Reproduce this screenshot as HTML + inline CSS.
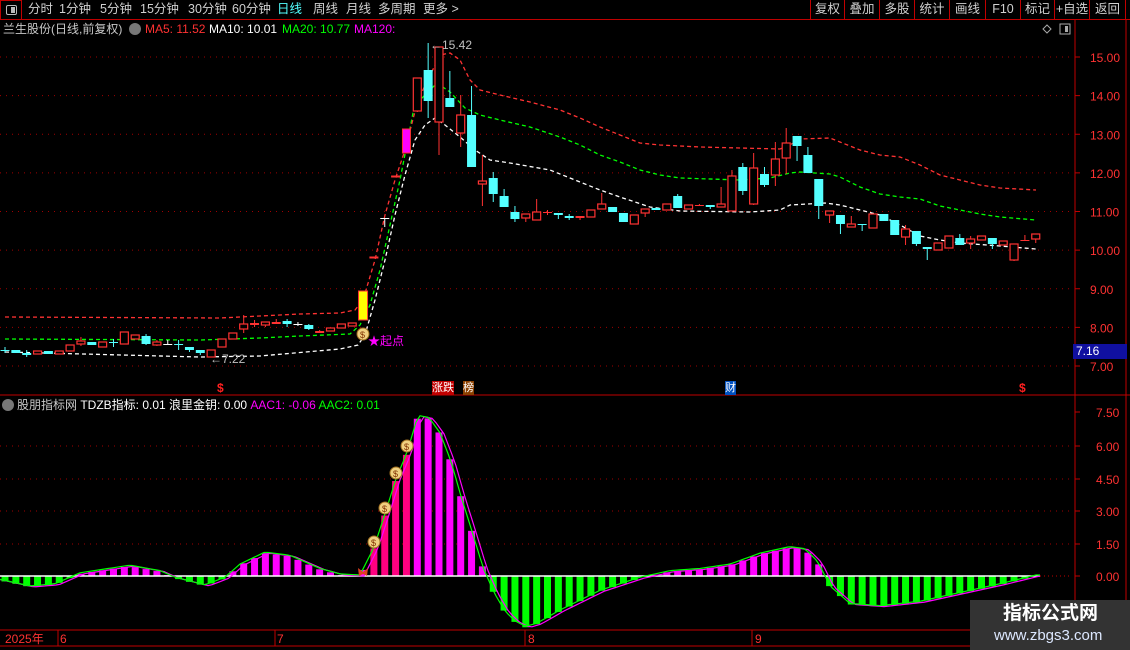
<!DOCTYPE html>
<html><head><meta charset="utf-8">
<style>
*{margin:0;padding:0;box-sizing:border-box}
body{width:1130px;height:650px;background:#000;overflow:hidden;font-family:"Liberation Sans","Noto Sans CJK SC",sans-serif;position:relative;color:#c8c8c8}
.t{position:absolute;white-space:nowrap;font-size:12px;line-height:14px}
#top{position:absolute;left:0;top:0;width:1130px;height:20px;border-bottom:1px solid #c00000}
#top span{position:absolute;top:2px;font-size:12.5px;line-height:15px;color:#d0d0d0}
.btn{position:absolute;top:0;height:20px;border-left:1px solid #c00000;font-size:12.5px;line-height:19px;text-align:center;color:#d0d0d0}
svg{position:absolute;left:0;top:0}
</style></head><body>
<div id="top">
<div style="position:absolute;left:0;top:0;width:22px;height:20px;border:1px solid #c00000"><div style="position:absolute;left:5px;top:4px;width:11px;height:10px;border:1px solid #bbb;border-radius:2px"><div style="position:absolute;left:4px;top:1px;width:4px;height:6px;background:#bbb"></div></div></div>
<span style="left:28px">分时</span><span style="left:59px">1分钟</span><span style="left:100px">5分钟</span><span style="left:140px">15分钟</span><span style="left:188px">30分钟</span><span style="left:232px">60分钟</span><span style="left:277px;color:#54ffff">日线</span><span style="left:313px">周线</span><span style="left:346px">月线</span><span style="left:378px">多周期</span><span style="left:423px">更多 &gt;</span>
<div class="btn" style="left:810px;width:34px">复权</div><div class="btn" style="left:844px;width:35px">叠加</div><div class="btn" style="left:879px;width:35px">多股</div><div class="btn" style="left:914px;width:35px">统计</div><div class="btn" style="left:949px;width:36px">画线</div><div class="btn" style="left:985px;width:35px">F10</div><div class="btn" style="left:1020px;width:34px">标记</div><div class="btn" style="left:1054px;width:35px">+自选</div><div class="btn" style="left:1089px;width:37px;border-right:1px solid #c00000">返回</div>
</div>
<svg id="s" width="1130" height="650"></svg>
<div class="t" style="left:3px;top:22px;color:#c8c8c8">兰生股份(日线,前复权)</div>
<div style="position:absolute;left:129px;top:23px;width:12px;height:12px;border-radius:6px;background:#777"></div>
<div class="t" style="left:145px;top:22px;color:#ff3232">MA5: 11.52</div>
<div class="t" style="left:209px;top:22px;color:#fff">MA10: 10.01</div>
<div class="t" style="left:282px;top:22px;color:#00ff00">MA20: 10.77</div>
<div class="t" style="left:354px;top:22px;color:#ff00ff">MA120:</div>
<div style="position:absolute;left:2px;top:399px;width:12px;height:12px;border-radius:6px;background:#777"></div>
<div class="t" style="left:17px;top:398px;color:#c8c8c8">股朋指标网 <span style="color:#fff">TDZB指标: 0.01 浪里金钥: 0.00</span> <span style="color:#ff00ff">AAC1: -0.06</span> <span style="color:#00ff00">AAC2: 0.01</span></div>
<div class="t" style="left:430px;top:38px;color:#c0c0c0">←15.42</div>
<div class="t" style="left:210px;top:352px;color:#c0c0c0">←7.22</div>
<div class="t" style="left:368px;top:334px;color:#ff00ff">★起点</div>
<div class="t" style="left:1073px;top:344px;width:54px;height:15px;background:#1010a0;color:#fff;padding-left:3px">7.16</div>
<div class="t" style="left:432px;top:381px;height:14px;background:#c00000;color:#fff;font-size:11px">涨跌</div>
<div class="t" style="left:463px;top:381px;height:14px;background:#8b4000;color:#fff;font-size:11px">榜</div>
<div class="t" style="left:725px;top:381px;height:14px;background:#0050c0;color:#fff;font-size:11px">财</div>
<div class="t" style="left:217px;top:381px;color:#ff2020;font-weight:bold">$</div>
<div class="t" style="left:1019px;top:381px;color:#ff2020;font-weight:bold">$</div>
<div class="t" style="left:5px;top:632px;color:#ff3232">2025年</div>
<div class="t" style="left:60px;top:632px;color:#ff3232">6</div>
<div class="t" style="left:277px;top:632px;color:#ff3232">7</div>
<div class="t" style="left:528px;top:632px;color:#ff3232">8</div>
<div class="t" style="left:755px;top:632px;color:#ff3232">9</div>
<div style="position:absolute;left:970px;top:600px;width:160px;height:50px;background:#333"></div>
<div class="t" style="left:1003px;top:603px;font-size:19px;line-height:22px;color:#fff;font-weight:bold">指标公式网</div>
<div class="t" style="left:994px;top:627px;font-size:15px;line-height:18px;color:#dde8ff">www.zbgs3.com</div>
<script>
var s=document.getElementById('s'),h='';
function L(x1,y1,x2,y2,c,w,d){h+='<line x1="'+x1+'" y1="'+y1+'" x2="'+x2+'" y2="'+y2+'" stroke="'+c+'" stroke-width="'+(w||1)+'"'+(d?' stroke-dasharray="'+d+'"':'')+'/>';}
function T(x,y,t,c){h+='<text x="'+x+'" y="'+y+'" fill="'+c+'" font-size="12" font-family="Liberation Sans">'+t+'</text>';}
L(1075,20,1075,650,'#c00000');L(1126,20,1126,650,'#c00000');
L(0,395,1130,395,'#c00000');L(0,630,1075,630,'#c00000');L(0,646,1075,646,'#c00000');
[58,275,525,752].forEach(function(x){L(x,630,x,646,'#c00000')});
for(var p=15;p>=7;p--){var y=57+(15-p)*38.625;L(0,y,1072,y,'#a00000',1,'1 5');L(1075,y,1080,y,'#c00000');T(1090,y+5,p.toFixed(2),'#ff3232');}
var lv=[[7.5,412],[6,446],[4.5,479],[3,511],[1.5,544],[0,576]];
lv.forEach(function(a){if(a[0]>0&&a[0]<7)L(0,a[1],1072,a[1],'#a00000',1,'1 5');L(1075,a[1],1080,a[1],'#c00000');T(1096,a[1]+5,a[0].toFixed(2),'#ff3232');});
function P(pts,c){h+='<polyline fill="none" stroke="'+c+'" stroke-width="1.3" stroke-dasharray="4 3" points="'+pts+'"/>';}
P('5,352 200,357 260,356 340,349 358,345 365,335 375,300 385,260 395,215 405,175 415,140 425,125 435,118 445,125 460,137 475,150 490,160 510,163 550,170 570,178 600,190 620,197 650,207 680,211 750,212 780,210 790,205 825,203 840,205 860,210 880,215 900,225 920,236 940,240 960,243 1000,246 1036,249','#fff');
P('5,339 200,340 260,338 300,336 350,334 360,325 370,305 380,270 390,225 400,180 413,113 420,100 437,83 450,92 465,108 480,115 500,120 530,127 560,137 580,145 600,155 620,162 640,170 660,175 680,178 740,180 770,178 790,173 800,172 830,174 840,177 860,187 880,194 900,197 920,199 940,206 960,210 980,214 1000,217 1036,220','#00ff00');
P('5,317 220,318 260,316 300,314 340,313 355,310 363,300 375,260 385,215 395,180 405,150 418,100 440,55 450,53 460,60 470,80 480,90 500,95 530,102 560,110 580,118 600,127 620,135 640,143 660,145 700,147 740,148 780,149 790,145 800,139 830,138 840,142 860,150 880,155 900,157 920,165 940,175 960,180 980,185 1000,188 1036,190','#ff3232');
var C=[[350,351,347,353,'c'],[350,353,0,0,'c'],[353,355,350,357,'c'],[351,354,0,0,'r'],[351,354,0,0,'c'],[351,354,0,0,'r'],[345,351,0,0,'r'],[341,344,337,346,'r'],[342,345,0,0,'c'],[342,347,0,0,'r'],[342,343,339,347,'c'],[332,344,0,0,'r'],[335,339,0,0,'r'],[336,344,334,345,'c'],[342,345,340,346,'r'],[344,345,340,345,'w'],[344,345,340,350,'c'],[347,350,0,352,'c'],[350,353,0,355,'c'],[350,357,0,0,'r'],[339,347,0,0,'r'],[333,339,0,0,'r'],[324,329,315,333,'r'],[323,325,320,327,'r'],[322,325,0,327,'r'],[322,324,319,0,'r'],[321,324,319,327,'c'],[324,325,322,326,'w'],[325,329,324,330,'c'],[331,333,330,0,'r'],[328,331,0,0,'r'],[324,328,0,0,'r'],[323,326,0,0,'r'],[291,320,0,0,'y'],[257,258,0,0,'m'],[218,219,218,227,'w'],[176,177,0,0,'m'],[129,153,0,0,'m'],[78,111,0,112,'r'],[70,101,43,118,'c'],[47,122,0,155,'r'],[98,107,71,0,'c'],[115,133,95,147,'r'],[115,167,86,0,'c'],[181,184,155,206,'r'],[178,194,172,202,'c'],[196,207,189,0,'c'],[212,219,206,222,'c'],[214,218,0,222,'r'],[212,220,199,0,'r'],[212,213,210,215,'r'],[213,215,0,219,'c'],[216,218,214,220,'c'],[216,218,0,220,'r'],[210,217,0,0,'r'],[204,209,193,0,'r'],[207,212,0,0,'c'],[213,222,0,0,'c'],[215,224,0,0,'r'],[209,213,0,217,'r'],[208,210,0,0,'c'],[204,210,0,0,'r'],[196,208,194,0,'c'],[205,209,0,0,'r'],[205,206,204,0,'r'],[205,207,205,209,'c'],[204,207,187,0,'r'],[176,211,170,0,'r'],[167,191,163,195,'c'],[168,204,153,205,'r'],[174,185,167,187,'c'],[159,175,142,186,'r'],[143,158,128,174,'r'],[136,146,0,161,'c'],[155,173,147,0,'c'],[179,206,0,219,'c'],[211,215,0,223,'r'],[215,224,0,234,'c'],[224,227,216,0,'r'],[224,225,0,231,'c'],[214,228,0,0,'r'],[214,221,0,0,'c'],[220,235,0,0,'c'],[229,237,225,245,'r'],[231,244,0,246,'c'],[247,249,0,260,'c'],[243,250,0,0,'r'],[236,248,0,0,'r'],[238,245,234,0,'c'],[239,243,236,249,'r'],[236,240,0,0,'r'],[238,244,0,249,'c'],[241,245,0,0,'r'],[244,260,0,261,'r'],[240,241,235,0,'r'],[234,239,0,243,'r']];
C.forEach(function(c,i){var x=5+i*10.85,t=c[4],col={r:'#ff3232',c:'#54ffff',w:'#fff',m:'#ff00ff',y:'#ffff00'}[t];
var wt=c[2]||c[0],wb=c[3]||c[1];L(x,wt,x,wb,t=='m'?'#ff3232':col);
var hh=Math.max(c[1]-c[0],1);
if(t=='r'&&hh>2)h+='<rect x="'+(x-4)+'" y="'+c[0]+'" width="8" height="'+hh+'" fill="#000" stroke="'+col+'" stroke-width="1.2"/>';
else if(t=='y')h+='<rect x="'+(x-4.5)+'" y="'+c[0]+'" width="9" height="'+hh+'" fill="#ffff00" stroke="#ff3232"/>';
else if(t=='m')h+='<rect x="'+(x-4)+'" y="'+c[0]+'" width="8" height="'+hh+'" fill="#ff00ff" stroke="#ff3232"/>';
else h+='<rect x="'+(x-4.5)+'" y="'+c[0]+'" width="9" height="'+hh+'" fill="'+col+'"/>';});
var K=[[0,-0.2],[30,-0.5],[55,-0.4],[80,0.1],[130,0.45],[160,0.2],[175,-0.1],[205,-0.45],[225,-0.1],[240,0.5],[265,1.05],[290,0.9],[320,0.3],[340,0.05],[360,0],[374,1.27],[385,2.8],[396,4.4],[407,5.6],[418,7.3],[429,7.2],[440,6.5],[451,5.2],[461,3.6],[472,2.0],[483,0.35],[494,-0.8],[505,-1.65],[515,-2.1],[526,-2.35],[537,-2.2],[560,-1.6],[600,-0.7],[640,-0.1],[670,0.2],[700,0.3],[730,0.5],[760,1.0],[790,1.3],[805,1.2],[818,0.6],[830,-0.5],[850,-1.3],[880,-1.4],[920,-1.2],[960,-0.8],[1000,-0.4],[1036,0]];
function V(x){for(var j=1;j<K.length;j++)if(x<=K[j][0]){var a=K[j-1],b=K[j];return a[1]+(b[1]-a[1])*(x-a[0])/(b[0]-a[0]);}return 0;}
var Z=576,S=21.87;
for(var i=0;i<96;i++){var x=5+i*10.85,v=V(x),y=Z-v*S;var col=v>=0?((i>=34&&i<=37)?'#ff0080':'#ff00ff'):'#00ff00';
h+='<rect x="'+(x-3.5)+'" y="'+Math.min(y,Z)+'" width="7" height="'+Math.abs(v*S)+'" fill="'+col+'"/>';}
L(0,Z,1040,Z,'#fff',1.5);L(1040,Z,1072,Z,'#c00000',1,'1 3');
var g='',m='';for(var x=0;x<=1040;x+=4){g+=x+','+(Z-V(x)*S-1)+' ';m+=x+','+(Z-V(x-4)*S)+' ';}
h+='<polyline fill="none" stroke="#ff00ff" stroke-width="1.2" points="'+m+'"/><polyline fill="none" stroke="#00ff00" stroke-width="1.2" points="'+g+'"/>';
function B(x,y){h+='<circle cx="'+x+'" cy="'+y+'" r="6" fill="#f0d080" stroke="#a07020"/><text x="'+(x-3)+'" y="'+(y+4)+'" font-size="9" fill="#803000" font-family="Liberation Sans">$</text>';}
B(363,334);B(374,542);B(385,508);B(396,473);B(407,446);
h+='<path d="M358,568 l5,4 l5,-4 l-1,8 l-4,-2 l-4,2z" fill="#e04020"/>';
h+='<path d="M1047,25 l4,4 l-4,4 l-4,-4z" fill="none" stroke="#aaa"/><rect x="1060" y="24" width="10" height="10" fill="none" stroke="#aaa"/><rect x="1065" y="26" width="3" height="6" fill="#aaa"/>';
s.innerHTML=h;
</script>
</body></html>
